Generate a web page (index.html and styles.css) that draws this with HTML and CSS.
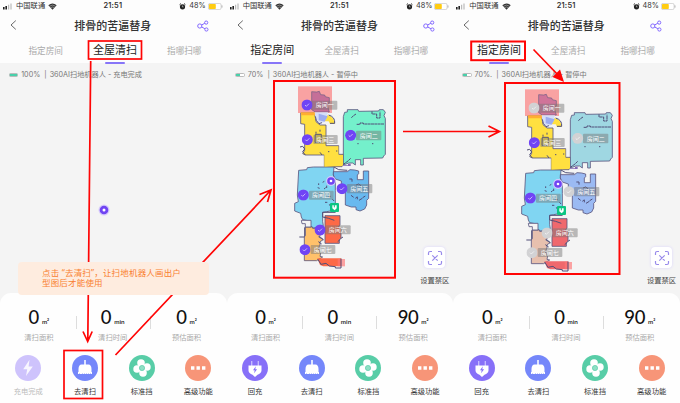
FILE: index.html
```html
<!DOCTYPE html>
<html lang="zh-CN">
<head>
<meta charset="utf-8">
<title>扫地机器人</title>
<link rel="stylesheet" href="styles.css">
</head>
<body>
<svg class="defs" width="0" height="0" aria-hidden="true">
  <symbol id="signal" viewBox="0 0 10 7"><path d="M0 4h1.6v2.5H0zM2.4 3H4v3.5H2.4z" fill="#222"/><path d="M5 1.8h1.2v4.7H5zM7.4.6h1.2v5.9H7.4z" fill="#bbb"/></symbol>
  <symbol id="wifi" viewBox="0 0 9 7"><path d="M.3 2.2Q4.5-1.3 8.7 2.2L4.5 6.8z" fill="#333"/><path d="M1.5 3.2q3-2.2 6 0M2.8 4.6q1.7-1.2 3.4 0" fill="none" stroke="#fff" stroke-width=".4"/></symbol>
  <symbol id="alarm" viewBox="0 0 7 7"><circle cx="3.5" cy="3.8" r="2.6" fill="#222"/><path d="M.6 1.7 1.9.6M6.4 1.7 5.1.6" stroke="#222"/><path d="M3.4 2.4v1.5h1.2" fill="none" stroke="#fff" stroke-width=".5"/></symbol>
  <symbol id="power" viewBox="0 0 15 7"><rect x=".4" y=".4" width="12.7" height="6.2" rx="1.6" fill="#fff" stroke="#aaa" stroke-width=".5"/><rect x="1" y="1" width="6.8" height="5" rx=".8" fill="#ffcc12"/><path d="M14 2.4v2.2" stroke="#999" stroke-width=".7"/></symbol>
  <symbol id="back" viewBox="0 0 7 10"><path d="M5.8.6 1 5l4.8 4.4" fill="none" stroke="#444" stroke-width=".8"/></symbol>
  <symbol id="share" viewBox="0 0 12 12"><g fill="none" stroke="#8368ff"><circle cx="2.8" cy="6" r="2.1"/><circle cx="9.2" cy="2.6" r="1.6"/><circle cx="9.4" cy="9.5" r="1.6"/><path d="m4.7 4.9 3.1-1.6M4.7 7l3.2 1.7"/></g></symbol>
  <symbol id="robot" viewBox="0 0 12 12"><circle cx="6" cy="6" r="5.5" fill="#d6cafc"/><circle cx="6" cy="6" r="4.3" fill="#7044f2"/><circle cx="6" cy="6" r="1.5" fill="#fff"/></symbol>
  <symbol id="bolt" viewBox="0 0 26 26"><circle cx="13" cy="13" r="13" fill="#cec3fc"/><path d="M14.500 4.800 8.200 14.200h4L11 21l6.800-9.400h-4.200z" fill="#fff" fill-opacity=".85"/></symbol>
  <symbol id="plug" viewBox="0 0 26 26"><circle cx="13" cy="13" r="13" fill="#8770f8"/><path d="M9.700 6v5M16.300 6v5" stroke="#c8bfff" stroke-width="1.300"/><path d="M6.500 10.500h13v5q-.3 3-4 4.300L13 22l-2.500-2.200q-3.700-1.300-4-4.300z" fill="#fff"/><path d="m13.800 11.300-2.800 4h1.700l-.6 3 3-4h-1.800z" fill="#8770f8"/></symbol>
  <symbol id="brush" viewBox="0 0 26 26"><circle cx="13" cy="13" r="13" fill="#7587fa"/><path d="M12 5h2v5h-2z" fill="#dfe4ff"/><path d="M6.500 17v-3q.2-4.300 3-4.500h7q2.800.2 3 4.500v3z" fill="#fff"/><path d="M6 17h14v2h-1l-.5-.8-.5.8h-1l-.5-.8-.5.8h-1l-.5-.8-.5.8h-1l-.5-.8-.5.8h-1l-.5-.8-.5.8H8l-.5-.8-.5.800H6z" fill="#fff"/></symbol>
  <symbol id="fan" viewBox="0 0 26 26"><circle cx="13" cy="13" r="13" fill="#58cda7"/><g fill="#fff"><ellipse cx="12" cy="7.900" rx="3.800" ry="3.700"/><ellipse cx="18" cy="12" rx="3.700" ry="3.800"/><ellipse cx="14" cy="18" rx="3.800" ry="3.700"/><ellipse cx="8" cy="14" rx="3.700" ry="3.800"/></g><circle cx="13" cy="13" r="2.600" fill="#8fdfc5" stroke="#58cda7" stroke-width=".7"/></symbol>
  <symbol id="more" viewBox="0 0 26 26"><circle cx="13" cy="13" r="13" fill="#f79578"/><path d="M6 11.300h3.400v3.400H6zM11.500 11.300h3.400v3.400h-3.400zM17 11.300h3.400v3.400H17z" fill="#fff"/></symbol>
  <symbol id="zone" viewBox="0 0 16 16"><path d="M1.500 5V3q0-1.500 1.500-1.500h2M11 1.500h2q1.500 0 1.500 1.500v2M14.500 11v2q0 1.500-1.500 1.500h-2M5 14.500H3q-1.500 0-1.500-1.500v-2M5.300 5.300l5.400 5.400M10.700 5.300l-5.400 5.400" fill="none" stroke="#988aeb" stroke-width="1.200"/></symbol>
  <symbol id="check" viewBox="-17 -17 34 34"><circle r="16.500" fill="currentColor"/><path d="m-6 0 4 4 8-8" fill="none" stroke="#fff" stroke-width="1.800"/></symbol>

  <symbol id="map" viewBox="0 0 390 615">
    <rect x="84" y="34" width="102" height="80" fill="#f9a2a2"/>
    <g stroke="#5a5780" stroke-width="2.500" stroke-linejoin="miter">
      <path class="room1" d="M125 79V50L140 51 148 49 152 59 164 60 166 65 178 68 178 84 172 90 178 111 136 111 125 104z" stroke-opacity=".7"/>
      <path d="M92 114H134L138 140 150 150H168V212H206V238H221V264L216 275H163V240H106L98 236 104 226 104 148 92 146z" fill="#ffe040"/>
      <path class="room2" d="M220 125L224 112 232 111 232 104 264 104 266 109 326 108 328 104 340 104 346 112 342 122 346 130V238L341 243 338 249 280 250V270H272V254H256V270L248 264 236 264 220 270z"/>
      <path d="M86 286L110 284 112 278 130 276H192L190 300 196 320V346H196V405L170 410 158 412 158 440 160 452 128 460 120 450V438L98 434 94 426 92 415 74 408V385L85 380 82 360z" fill="#80d5f2"/>
      <path class="room5" d="M190 300V290H232L240 284 254 285 266 288 266 296 262 300V314H280V288H296V370L290 376V390L284 402 270 408 258 404 258 396 244 396 226 390V340L214 332V318L196 312z"/>
      <path class="room6" d="M165 422H210V450L206 456 213 462V490L208 494V505H165z"/>
      <path class="room7" d="M106 456H128V460H150L150 482 146 486 160 494 150 500V510L145 520 152 534 150 544 158 546 140 557H103V485L106 482z"/>
    </g>
    <path d="M163 238h40v-24h2v26h14v32l-56 3z" fill="#ffe040"/>
    <path d="M92 112h46l-3 9H94z" fill="#ffad32"/>
    <path d="M170 120q22 1 24 27h-14l-4-8h-12z" fill="#ffe040"/>
    <path d="M134 112h40l-4 16-10 15h-14l-9-12z" fill="#d5def8"/>
    <path d="m136 124 3 12 8 10 9-3" fill="none" stroke="#5a5780" stroke-width="3"/>
    <path d="m146 116 27 8-9 16-18-4z" fill="#9cacf0"/>
    <path class="room6" d="M142 550h72v24h-54l-10-4z"/>
    <path d="M203 552h22v22h-22z" fill="#ff7777" opacity=".65"/>
    <path d="M94 436h29v20H106V446H96z" fill="#f4f4f4" stroke="#5a5780" stroke-width="2.500"/>
    <g fill="none" stroke="#514f78" stroke-width="3">
      <path d="M90 216l8-2 6 8-6 8 8 10M176 120q20 6 18 25h-14M136 178h18v24h-19zM138 170v6M150 164v6M174 230h4M198 228h4M150 232l6 8"/>
      <path d="M244 128l8-7 6-4M306 109v8h14v12h10V110M260 148h10v-4h10v3h62M262 206h4M306 206h4M220 268l14-10 8-8" stroke-dasharray="9 1"/>
      <path d="M146 325v5M158 322l5-3M143 338l6 2M162 342l5-4M148 356l3-5M170 332v7M174 366l8-2M187 372l5 6M165 382h7M178 388l4 7"/>
      <path d="M192 276l14 8 26 2M258 330l8-3 7 5M256 370l6-5M267 376l10-6M243 361l8 6M262 366v7M286 363l-8 5M238 312h8v8"/>
      <path d="M196 408v4h-38v14l18 4 17 6M213 490l6-4M203 500l8-7M88 486h15M104 457v28M145 500l10 7M148 484l12 10M143 552l10 16 15-3 10 8 18 2v4h17v-28"/>
    </g>
    <path d="M218 271h16v-5h8v7h-24z" fill="#8469b2"/>
    <g fill="#777" fill-opacity=".48">
      <rect x="124" y="77" width="78" height="27" rx="3"/><rect x="258" y="167" width="76" height="29" rx="3"/><rect x="130" y="180" width="73" height="27" rx="3"/><rect x="117" y="347" width="74" height="27" rx="3"/><rect x="231" y="327" width="76" height="28" rx="3"/><rect x="166" y="451" width="76" height="27" rx="3"/><rect x="122" y="510" width="74" height="27" rx="3"/>
    </g>
    <use href="#check" class="badge2" x="94" y="73" width="34" height="34"/>
    <use href="#check" class="badge2" x="225" y="164" width="34" height="34"/>
    <use href="#check" class="badge3" x="95" y="177" width="34" height="34"/>
    <use href="#check" class="badge3" x="83" y="343" width="34" height="34"/>
    <use href="#check" class="badge2" x="199" y="324" width="34" height="34"/>
    <use href="#check" class="badge2" x="133" y="448" width="34" height="34"/>
    <use href="#check" class="badge2" x="88" y="507" width="34" height="34"/>
    <use href="#robot" x="167" y="302" width="32" height="32"/>
    <rect x="180" y="384" width="27" height="27" rx="3" fill="#0bc582"/><path d="M187 391h13v9l-6 6-7-6z" fill="#fff"/><path d="M193 388v9" stroke="#0bc582" stroke-width="3"/>
  </symbol>
</svg>

<main class="screens">
  <section class="phone">
    <header class="head">
      <div class="system"><div class="carrier"><svg class="signal"><use href="#signal"/></svg><span>中国联通</span><svg class="wifi"><use href="#wifi"/></svg></div><b class="clock">21:51</b><div class="charge"><svg class="alarm"><use href="#alarm"/></svg><span>48%</span><svg class="power"><use href="#power"/></svg></div></div>
      <div class="nav"><svg class="back"><use href="#back"/></svg><h1>排骨的苦逼替身</h1><svg class="share"><use href="#share"/></svg></div>
      <nav class="tabs"><span>指定房间</span><span class="active">全屋清扫</span><span>指哪扫哪</span></nav>
    </header>
    <div class="stage">
      <div class="state"><i class="cell full"></i><span class="percent">100%</span><span class="bar">|</span><span>360AI扫地机器人 - 充电完成</span></div>
      <svg class="robot"><use href="#robot"/></svg>
      <p class="toast">点击 “去清扫”，让扫地机器人画出户<br>型图后才能使用</p>
    </div>
    <div class="sheet">
      <div class="stats"><div><p><b>0</b><small>m²</small></p><span>清扫面积</span></div><div><p><b>0</b><small>min</small></p><span>清扫时间</span></div><div><p><b>0</b><small>m²</small></p><span>预估面积</span></div></div>
      <div class="actions"><div class="muted"><svg><use href="#bolt"/></svg><span>充电完成</span></div><div><svg><use href="#brush"/></svg><span>去清扫</span></div><div><svg><use href="#fan"/></svg><span>标准挡</span></div><div><svg><use href="#more"/></svg><span>高级功能</span></div></div>
    </div>
  </section>

  <section class="phone">
    <header class="head">
      <div class="system"><div class="carrier"><svg class="signal"><use href="#signal"/></svg><span>中国联通</span><svg class="wifi"><use href="#wifi"/></svg></div><b class="clock">21:51</b><div class="charge"><svg class="alarm"><use href="#alarm"/></svg><span>48%</span><svg class="power"><use href="#power"/></svg></div></div>
      <div class="nav"><svg class="back"><use href="#back"/></svg><h1>排骨的苦逼替身</h1><svg class="share"><use href="#share"/></svg></div>
      <nav class="tabs"><span class="active">指定房间</span><span>全屋清扫</span><span>指哪扫哪</span></nav>
    </header>
    <div class="stage">
      <div class="state"><i class="cell"></i><span class="percent">70%</span><span class="bar">|</span><span>360AI扫地机器人 - 暂停中</span></div>
      <svg class="map" viewBox="0 0 390 615"><use href="#map" width="390" height="615"/><g class="names"><text x="137" y="97">房间一</text><text x="269" y="188">房间二</text><text x="139" y="200">房间三</text><text x="126" y="367">房间四</text><text x="241" y="348">房间五</text><text x="176" y="471">房间六</text><text x="131" y="530">房间七</text></g></svg>
      <div class="zone"><div class="zone-icon"><svg><use href="#zone"/></svg></div><span>设置禁区</span></div>
    </div>
    <div class="sheet">
      <div class="stats"><div><p><b>0</b><small>m²</small></p><span>清扫面积</span></div><div><p><b>0</b><small>min</small></p><span>清扫时间</span></div><div><p><b>90</b><small>m²</small></p><span>预估面积</span></div></div>
      <div class="actions"><div><svg><use href="#plug"/></svg><span>回充</span></div><div><svg><use href="#brush"/></svg><span>去清扫</span></div><div><svg><use href="#fan"/></svg><span>标准挡</span></div><div><svg><use href="#more"/></svg><span>高级功能</span></div></div>
    </div>
  </section>

  <section class="phone">
    <header class="head">
      <div class="system"><div class="carrier"><svg class="signal"><use href="#signal"/></svg><span>中国联通</span><svg class="wifi"><use href="#wifi"/></svg></div><b class="clock">21:51</b><div class="charge"><svg class="alarm"><use href="#alarm"/></svg><span>48%</span><svg class="power"><use href="#power"/></svg></div></div>
      <div class="nav"><svg class="back"><use href="#back"/></svg><h1>排骨的苦逼替身</h1><svg class="share"><use href="#share"/></svg></div>
      <nav class="tabs"><span class="active">指定房间</span><span>全屋清扫</span><span>指哪扫哪</span></nav>
    </header>
    <div class="stage">
      <div class="state"><i class="cell"></i><span class="percent">70%.</span><span class="bar">|</span><span>360AI扫地机器人 - 暂停中</span></div>
      <svg class="map partial" viewBox="0 0 390 615"><use href="#map" width="390" height="615"/><g class="names"><text x="137" y="97">房间一</text><text x="269" y="188">房间二</text><text x="139" y="200">房间三</text><text x="126" y="367">房间四</text><text x="241" y="348">房间五</text><text x="176" y="471">房间六</text><text x="131" y="530">房间七</text></g></svg>
      <div class="zone"><div class="zone-icon"><svg><use href="#zone"/></svg></div><span>设置禁区</span></div>
    </div>
    <div class="sheet">
      <div class="stats"><div><p><b>0</b><small>m²</small></p><span>清扫面积</span></div><div><p><b>0</b><small>min</small></p><span>清扫时间</span></div><div><p><b>90</b><small>m²</small></p><span>预估面积</span></div></div>
      <div class="actions"><div><svg><use href="#plug"/></svg><span>回充</span></div><div><svg><use href="#brush"/></svg><span>去清扫</span></div><div><svg><use href="#fan"/></svg><span>标准挡</span></div><div><svg><use href="#more"/></svg><span>高级功能</span></div></div>
    </div>
  </section>
</main>

<svg class="notes" viewBox="0 0 680 403" fill="none" stroke="#ff0505" stroke-width="1.700">
  <rect x="88.500" y="41" width="53" height="18"/>
  <path d="M90.700 61 87.800 341M83 331.500l4.700 10 4.500-10"/>
  <rect x="64" y="350.500" width="38.500" height="48"/>
  <path d="M115.500 355 270.500 190.500M259.500 194.500l11.500-4.500-3.500 12"/>
  <rect x="274" y="81" width="121" height="196.700" stroke-width="2"/>
  <path d="M403 131.500h96M488.500 126l11 5.500-11 5.500"/>
  <rect x="471.200" y="41.500" width="53.800" height="18.700" stroke-width="2"/>
  <path d="M533.500 49.500 560 77"/><path d="m564 82-11.500-5 7.500-7.500z" fill="#ff0505" stroke="none"/>
  <rect x="505" y="83" width="114.500" height="191" stroke-width="2"/>
</svg>
</body>
</html>
```
FILE: styles.css
```css
* { box-sizing: border-box; }

body {
  margin: 0;
  width: 680px;
  height: 403px;
  overflow: hidden;
  position: relative;
  background: #f4f4f4;
  color: #333;
  font: 7.3px/10px Inter, "Noto Sans CJK SC", sans-serif;
}

svg { display: block; flex: none; }
p, h1 { margin: 0; }
.defs, .notes { position: absolute; left: 0; top: 0; }
.notes { width: 680px; height: 403px; }

.screens { display: grid; grid-template-columns: repeat(3, 1fr); height: 403px; }
.phone { display: flex; flex-direction: column; min-width: 0; }

.head { height: 63px; background: #fdfdfd; }
.system { height: 12px; display: grid; grid-template-columns: 1fr auto 1fr; align-items: center; padding: 0 4px 0 3px; }
.carrier, .charge { display: flex; align-items: center; gap: 3px; }
.charge { justify-content: flex-end; }
.signal { width: 10px; height: 7px; }
.wifi { width: 9px; height: 7px; }
.alarm { width: 7px; height: 7px; }
.power { width: 15px; height: 7px; margin-left: -1px; }
.clock { font-size: 7.4px; font-weight: 600; letter-spacing: .2px; }

.nav { height: 25px; display: grid; grid-template-columns: 1fr auto 1fr; align-items: center; padding: 0 18px 0 10px; }
.nav h1 { margin-left: 7px; font: 500 11px/16px "Noto Sans CJK SC", sans-serif; }
.back { width: 7px; height: 10px; }
.share { width: 12px; height: 12px; justify-self: end; margin-top: 2px; }

.tabs { height: 28px; display: grid; grid-template-columns: repeat(3, 69.3px); padding-left: 11px; color: #aaa; }
.tabs span { font-size: 8.6px; line-height: 28px; text-align: center; }
.tabs .active { font-size: 11px; line-height: 27px; color: #222; display: flex; flex-direction: column; align-items: center; }
.tabs .active::after { content: ""; width: 20px; height: 2.4px; border-radius: 2px; background: #8775f8; margin-top: -2.5px; flex: none; position: relative; }

.stage { height: 230px; position: relative; display: flow-root; }
.state { height: 12px; margin: 6px 0 0 8.7px; display: flex; align-items: center; color: #777; font-size: 7.2px; white-space: nowrap; }
.cell { width: 9.5px; height: 4.5px; border: .5px solid #bbb; border-radius: 1.5px; background: linear-gradient(90deg, #49d0aa 55%, #fff 55%); margin-right: 3px; }
.cell.full { background: #49d0aa; }
.bar { margin: 0 3px 0 4px; }
.robot { width: 12px; height: 12px; margin: 123px 0 0 98.3px; }
.map {
  width: 130px; height: 205px; margin: -6px 0 0 43.3px;
  --r1: #c56f98; --r2: #74f0cb; --r5: #69b9ef; --r6: #fd6947; --r7: #ffc16a;
  --picked: #7044f5; --other: #7044f5;
}
.partial { margin: -2.7px 0 0 43.7px; --r1: #d07499; --r2: #9fd7e2; --r5: #9bbaf3; --r6: #ef686d; --r7: #e7c0ae; --other: #d2d2d4; }
.room1 { fill: var(--r1); }
.room2 { fill: var(--r2); }
.room5 { fill: var(--r5); }
.room6 { fill: var(--r6); }
.room7 { fill: var(--r7); }
.badge2 { color: var(--other); }
.badge3 { color: var(--picked); }
.names { fill: #fff; font-size: 18px; }

.toast { position: absolute; left: 18px; top: 199px; width: 190.5px; height: 33px; padding: 6px 0 0 24px; border-radius: 4px; background: #feecdf; color: #f98030; font: 8.5px/10px "Noto Sans", "Noto Sans CJK SC", sans-serif; letter-spacing: .18px; white-space: nowrap; z-index: 1; }
.zone { position: absolute; right: 3.5px; top: 184px; width: 30px; display: flex; flex-direction: column; align-items: center; gap: 8px; white-space: nowrap; color: #444; }
.zone-icon { width: 21px; height: 21px; padding: 2.5px; border-radius: 4px; background: #fff; box-shadow: 0 0 3px #d8d1fb; }
.zone-icon svg { width: 16px; height: 16px; }

.sheet { height: 110px; border-radius: 11px 11px 0 0; background: #fefefe; }
.stats { height: 62px; display: grid; grid-template-columns: repeat(3, 73.8px); padding: 12px 0 0 2px; }
.stats div { text-align: center; color: #aaa; }
.stats div + div { background: linear-gradient(#ddd, #ddd) 0 11px / 1px 13px no-repeat; }
.stats p { height: 26px; display: flex; justify-content: center; align-items: baseline; gap: 3px; color: #111; font-family: Lato, sans-serif; line-height: 24px; }
.stats b { font-size: 18.5px; font-weight: 500; letter-spacing: -.4px; }
.stats small { font-size: 6.3px; font-weight: 600; }
.stats span { display: block; margin-top: 1.5px; }
.actions { display: grid; grid-template-columns: repeat(4, 1fr); }
.actions div { display: flex; flex-direction: column; align-items: center; gap: 5.5px; color: #333; }
.actions svg { width: 26px; height: 26px; }
.actions .muted { color: #bbb; }
```
